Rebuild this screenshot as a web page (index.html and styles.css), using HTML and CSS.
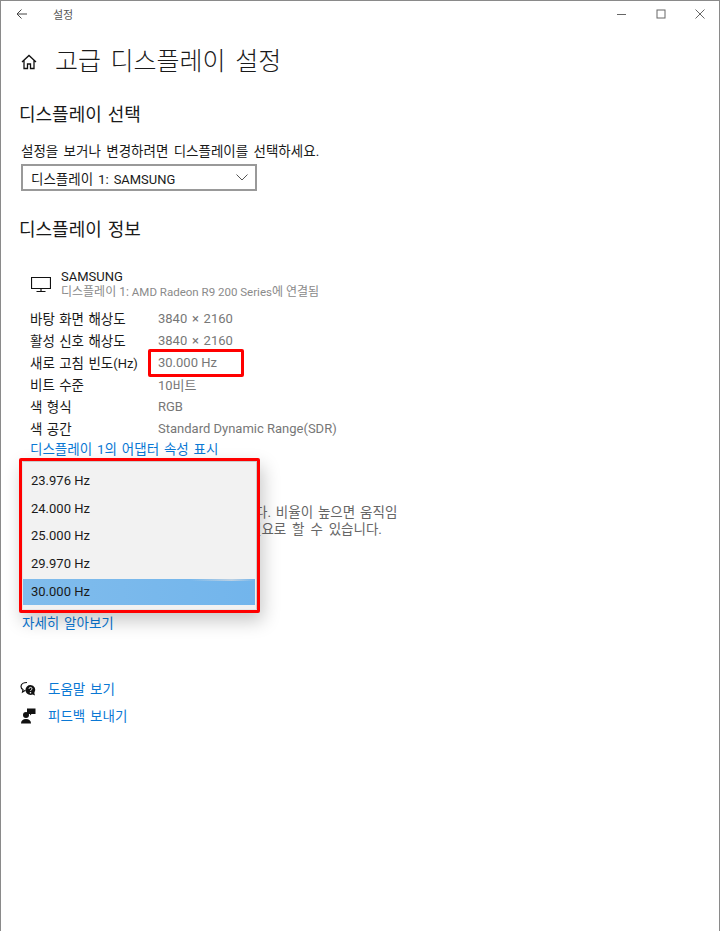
FILE: index.html
```html
<!DOCTYPE html>
<html lang="ko">
  <head>
    <meta charset="UTF-8" />
    <title>설정</title>
    <link rel="stylesheet" href="styles.css">
  </head>
  <body>
    <div class="window">
      <div class="titlebar">
        <svg class="back" width="12" height="12" viewBox="0 0 12 12"><path d="M11 6H1M5.500 1.500L1 6l4.500 4.500" fill="none" stroke="#444" stroke-width="1"/></svg>
        <span class="title">설정</span>
        <div class="controls">
          <svg width="10" height="10" viewBox="0 0 10 10"><path d="M0 5.500h9" stroke="#666" fill="none"/></svg>
          <svg width="10" height="10" viewBox="0 0 10 10"><rect x="1" y="1" width="8" height="8" stroke="#666" fill="none"/></svg>
          <svg width="10" height="10" viewBox="0 0 10 10"><path d="M.5.5l9 9M9.500.5l-9 9" stroke="#666" fill="none"/></svg>
        </div>
      </div>

      <div class="head">
        <svg width="16" height="16" viewBox="0 0 16 16"><path d="M1 8l7-6.500L15 8M3 6.500V14.500h3.500V10h3v4.500H13V6.500" fill="none" stroke="#111" stroke-width="1.300"/></svg>
        <h1>고급 디스플레이 설정</h1>
      </div>

      <h2 class="sec1">디스플레이 선택</h2>
      <p class="hint">설정을 보거나 변경하려면 디스플레이를 선택하세요.</p>
      <div class="select">
        <span>디스플레이 1: <span class="lat">SAMSUNG</span></span>
        <svg width="12" height="7" viewBox="0 0 12 7"><path d="M.5.5L6 6l5.500-5.500" fill="none" stroke="#555"/></svg>
      </div>

      <h2 class="sec2">디스플레이 정보</h2>
      <div class="monitor">
        <svg width="20" height="17" viewBox="0 0 20 17"><path d="M.5 1.500h19v11H.5zM10 12.500v3M5.500 15.500h9" fill="none" stroke="#111" stroke-width="1.200"/></svg>
        <div>
          <div class="mon-name">SAMSUNG</div>
          <div class="mon-sub">디스플레이 1: <span class="lat">AMD Radeon R9 200 Series</span>에 연결됨</div>
        </div>
      </div>
      <dl class="info">
        <dt>바탕 화면 해상도</dt><dd class="res">3840 × 2160</dd>
        <dt>활성 신호 해상도</dt><dd class="res">3840 × 2160</dd>
        <dt>새로 고침 빈도<span class="lat">(Hz)</span></dt><dd>30.000 Hz</dd>
        <dt>비트 수준</dt><dd>10비트</dd>
        <dt>색 형식</dt><dd>RGB</dd>
        <dt>색 공간</dt><dd>Standard Dynamic Range(SDR)</dd>
      </dl>
      <a class="link adapter">디스플레이 1의 어댑터 속성 표시</a>

      <div class="desc">
        <p class="line1">다. 비율이 높으면 움직임</p>
        <p class="line2">필요로 할 수 있습니다.</p>
      </div>
      <a class="link more">자세히 알아보기</a>

      <div class="help">
        <div class="help-row">
          <svg width="18" height="16" viewBox="0 0 18 16"><path d="M7 1.500C3.800 1.500 1 3 1 5.500c0 1.300.8 2.400 2 3L2.500 11l3-1.800" fill="none" stroke="#111" stroke-width="1.200"/><path d="M10.500 4a5 5 0 0 0 0 10c.8 0 1.500-.2 2.200-.5l2.300 1-.7-2.500a5 5 0 0 0-3.800-8z" fill="#111"/><path d="M9 7.800c0-1.900 3-1.900 3 0 0 1.100-1.500 1.100-1.500 2.200" fill="none" stroke="#fff"/><circle cx="10.500" cy="11.700" r=".8" fill="#fff"/></svg>
          <a class="link">도움말 보기</a>
        </div>
        <div class="help-row">
          <svg width="18" height="16" viewBox="0 0 18 16"><circle cx="6" cy="7" r="3" fill="#111"/><path d="M1 15.500c0-3 2-4.500 5-4.500s5 1.500 5 4.500z" fill="#111"/><path d="M7 .5h8.500v5.500h-4l-1.500 1.500V6H7z" fill="#111"/></svg>
          <a class="link">피드백 보내기</a>
        </div>
      </div>

      <div class="mark mark-rate"></div>
      <div class="rate-menu">
        <ul>
          <li>23.976 Hz</li>
          <li>24.000 Hz</li>
          <li>25.000 Hz</li>
          <li>29.970 Hz</li>
          <li class="on">30.000 Hz</li>
        </ul>
      </div>
    </div>
  </body>
</html>
```

FILE: styles.css
```css
* {
  margin: 0;
  padding: 0;
  box-sizing: border-box;
}

body {
  font-family: Roboto, "Noto Sans CJK KR", sans-serif;
  word-spacing: 1.500px;
  background: #fff;
  color: #1a1a1a;
}

.lat {
  font-size: 0.960em;
}

.window {
  position: relative;
  width: 720px;
  height: 931px;
  border: 1px solid #8a8a8a;
  border-bottom: 0;
  overflow: hidden;
}

.titlebar {
  display: flex;
  align-items: center;
  height: 26px;
  padding-left: 15px;
}

.title {
  margin-left: 25px;
  font-size: 11px;
  color: #555;
}

.controls {
  display: flex;
  gap: 29px;
  margin-left: auto;
  padding-right: 14px;
}

.head {
  display: flex;
  align-items: center;
  gap: 18px;
  margin-top: 16px;
  padding-left: 20px;
}

h1 {
  font-size: 25px;
  font-weight: 300;
  line-height: 38px;
  word-spacing: 3.500px;
}

h2 {
  font-size: 18px;
  font-weight: 400;
  line-height: 26px;
  padding-left: 18px;
}

.sec1 {
  margin-top: 21px;
}

.sec2 {
  margin-top: 26px;
}

.hint {
  margin-top: 13px;
  padding-left: 20px;
  font-size: 13.500px;
  line-height: 20px;
  word-spacing: 2px;
}

.select {
  display: flex;
  align-items: center;
  justify-content: space-between;
  width: 236px;
  height: 27px;
  margin: 3px 0 0 20px;
  padding: 0 7px 0 8px;
  border: 2px solid #999;
  font-size: 13.500px;
}

.monitor {
  display: flex;
  align-items: center;
  gap: 10px;
  margin-top: 26px;
  padding-left: 30px;
}

.mon-name {
  font-size: 13px;
  line-height: 16px;
  word-spacing: 0;
}

.mon-sub {
  font-size: 12px;
  line-height: 14px;
  color: #8a8a8a;
  word-spacing: 0;
}

.info {
  display: grid;
  grid-template-columns: 128px 1fr;
  grid-auto-rows: 22px;
  align-items: center;
  margin-top: 8px;
  padding-left: 29px;
  font-size: 13.500px;
  word-spacing: 1px;
}

.info dd {
  color: #777;
  font-size: 13px;
  word-spacing: 0;
}

.info .res {
  word-spacing: 1.500px;
}

.link {
  display: block;
  color: #0a78d4;
  font-size: 13.500px;
  line-height: 20px;
}

.adapter {
  padding-left: 29px;
}

.desc {
  margin-top: 44px;
  font-size: 13.500px;
  line-height: 18px;
  color: #666;
}

.line1 {
  padding-left: 254px;
}

.line2 {
  margin-top: -1px;
  padding-left: 248px;
  word-spacing: 2.500px;
}

.more {
  margin-top: 75px;
  padding-left: 21px;
}

.help {
  display: flex;
  flex-direction: column;
  gap: 7px;
  margin-top: 46px;
  padding-left: 19px;
}

.help-row {
  display: flex;
  align-items: center;
  gap: 10px;
}

.mark {
  position: absolute;
  border: 3px solid #f00;
  border-radius: 2px;
}

.mark-rate {
  left: 147px;
  top: 348px;
  width: 96px;
  height: 28px;
}

.rate-menu {
  position: absolute;
  left: 18px;
  top: 457px;
  width: 241px;
  height: 155px;
  background: #f2f2f2;
  border: 3px solid #f00;
  border-radius: 2px;
  box-shadow: 3px 8px 18px rgba(0, 0, 0, 0.22);
}

.rate-menu ul {
  list-style: none;
  height: 100%;
  padding: 5px 1px 0 0;
  border: 1px solid #ccc;
  border-left-color: #e6e6e6;
  border-bottom-color: #e6e6e6;
}

.rate-menu li {
  height: 27.500px;
  line-height: 27.500px;
  padding-left: 8px;
  font-size: 13px;
  word-spacing: 0;
}

.rate-menu .on {
  height: 25.500px;
  margin-top: 2px;
  line-height: 25.500px;
  background:
    linear-gradient(to right, transparent 72%, rgba(205, 215, 225, 0.8) 90%, transparent) no-repeat top / 100% 2px,
    linear-gradient(to right, #80bcec, #72b5ec);
}
```
